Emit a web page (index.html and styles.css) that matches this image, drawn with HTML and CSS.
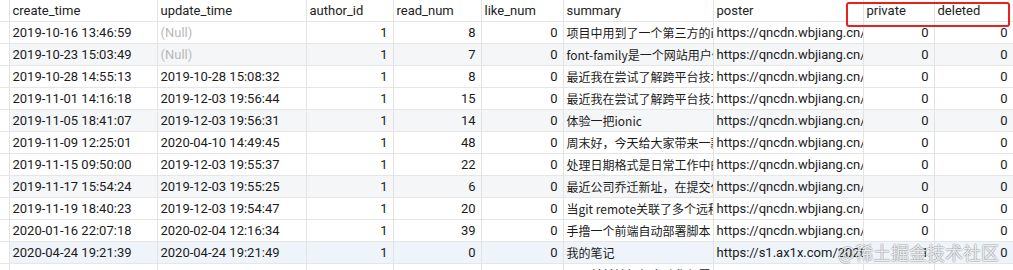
FILE: index.html
```html
<!DOCTYPE html>
<html lang="zh">
<head>
<meta charset="utf-8">
<link rel="stylesheet" href="styles.css">
</head>
<body>
<div class="grid-wrap">
<table class="grid">
<colgroup>
<col class="c-ind"><col class="c-create"><col class="c-update"><col class="c-author"><col class="c-read"><col class="c-like"><col class="c-summary"><col class="c-poster"><col class="c-private"><col class="c-deleted">
</colgroup>
<thead>
<tr><th></th><th>create_time</th><th>update_time</th><th>author_id</th><th>read_num</th><th>like_num</th><th>summary</th><th>poster</th><th>private</th><th>deleted</th></tr>
</thead>
<tbody>
<tr><td></td><td>2019-10-16 13:46:59</td><td class="null">(Null)</td><td class="num">1</td><td class="num">8</td><td class="num">0</td><td class="sum">项目中用到了一个第三方的ionic</td><td>https://qncdn.wbjiang.cn/a</td><td class="num">0</td><td class="num">0</td></tr>
<tr class="alt"><td></td><td>2019-10-23 15:03:49</td><td class="null">(Null)</td><td class="num">1</td><td class="num">7</td><td class="num">0</td><td class="sum">font-family是一个网站用户体验</td><td>https://qncdn.wbjiang.cn/a</td><td class="num">0</td><td class="num">0</td></tr>
<tr><td></td><td>2019-10-28 14:55:13</td><td>2019-10-28 15:08:32</td><td class="num">1</td><td class="num">8</td><td class="num">0</td><td class="sum">最近我在尝试了解跨平台技术</td><td>https://qncdn.wbjiang.cn/a</td><td class="num">0</td><td class="num">0</td></tr>
<tr><td></td><td>2019-11-01 14:16:18</td><td>2019-12-03 19:56:44</td><td class="num">1</td><td class="num">15</td><td class="num">0</td><td class="sum">最近我在尝试了解跨平台技术</td><td>https://qncdn.wbjiang.cn/a</td><td class="num">0</td><td class="num">0</td></tr>
<tr class="alt"><td></td><td>2019-11-05 18:41:07</td><td>2019-12-03 19:56:31</td><td class="num">1</td><td class="num">14</td><td class="num">0</td><td class="sum">体验一把ionic</td><td>https://qncdn.wbjiang.cn/a</td><td class="num">0</td><td class="num">0</td></tr>
<tr><td></td><td>2019-11-09 12:25:01</td><td>2020-04-10 14:49:45</td><td class="num">1</td><td class="num">48</td><td class="num">0</td><td class="sum">周末好，今天给大家带来一款</td><td>https://qncdn.wbjiang.cn/a</td><td class="num">0</td><td class="num">0</td></tr>
<tr><td></td><td>2019-11-15 09:50:00</td><td>2019-12-03 19:55:37</td><td class="num">1</td><td class="num">22</td><td class="num">0</td><td class="sum">处理日期格式是日常工作中的</td><td>https://qncdn.wbjiang.cn/a</td><td class="num">0</td><td class="num">0</td></tr>
<tr class="alt"><td></td><td>2019-11-17 15:54:24</td><td>2019-12-03 19:55:25</td><td class="num">1</td><td class="num">6</td><td class="num">0</td><td class="sum">最近公司乔迁新址，在提交代码</td><td>https://qncdn.wbjiang.cn/a</td><td class="num">0</td><td class="num">0</td></tr>
<tr><td></td><td>2019-11-19 18:40:23</td><td>2019-12-03 19:54:47</td><td class="num">1</td><td class="num">20</td><td class="num">0</td><td class="sum">当git remote关联了多个远程</td><td>https://qncdn.wbjiang.cn/a</td><td class="num">0</td><td class="num">0</td></tr>
<tr><td></td><td>2020-01-16 22:07:18</td><td>2020-02-04 12:16:34</td><td class="num">1</td><td class="num">39</td><td class="num">0</td><td class="sum">手撸一个前端自动部署脚本</td><td>https://qncdn.wbjiang.cn/</td><td class="num">0</td><td class="num">0</td></tr>
<tr class="alt sel"><td></td><td>2020-04-24 19:21:39</td><td>2020-04-24 19:21:49</td><td class="num">1</td><td class="num">0</td><td class="num">0</td><td class="sum">我的笔记</td><td>https://s1.ax1x.com/2020/04</td><td class="num">1</td><td class="num">0</td></tr>
<tr><td></td><td></td><td></td><td class="num"></td><td class="num"></td><td class="num"></td><td class="sum">用以前前端如何自动化部署</td><td></td><td class="num"></td><td class="num"></td></tr>
</tbody>
</table>
<div class="mark-box"></div>
<div class="watermark">@稀土掘金技术社区</div>
</div>
</body>
</html>
```

FILE: styles.css
```css
html, body {
  margin: 0;
  padding: 0;
  background: #ffffff;
}
body {
  width: 1013px;
  height: 270px;
  overflow: hidden;
  font-family: Roboto, "Noto Sans CJK SC", sans-serif;
  font-size: 13px;
  color: #1b1b1b;
}
.grid-wrap {
  position: relative;
  width: 1013px;
  height: 270px;
  overflow: hidden;
}
.grid {
  table-layout: fixed;
  border-collapse: collapse;
  width: 1013px;
}
.c-ind { width: 9px; }
.c-create { width: 148px; }
.c-update { width: 149px; }
.c-author { width: 87px; }
.c-read { width: 88px; }
.c-like { width: 82px; }
.c-summary { width: 150px; }
.c-poster { width: 150px; }
.c-private { width: 71px; }
.c-deleted { width: 79px; }

.grid th, .grid td {
  height: 21px;
  padding: 0 4px 0 3px;
  border-right: 1px solid #e3e3e3;
  border-bottom: 1px solid #e6e6e6;
  white-space: nowrap;
  overflow: hidden;
  text-overflow: clip;
  text-align: left;
  font-weight: normal;
  line-height: 21px;
}
.grid th {
  background: #ffffff;
  color: #222222;
}
.grid th:first-child, .grid td:first-child {
  padding: 0;
  background: #ffffff;
}
.grid td.num {
  text-align: right;
  padding-right: 5px;
}
.grid td.null {
  color: #b9b9b9;
}
.grid td.sum {
  font-family: "Noto Sans CJK SC", sans-serif;
  font-size: 12px;
  padding-left: 3px;
}
.grid tr.alt td {
  background: #f5f6f8;
}
.grid tr.sel td {
  background: #eff4fa;
}
.grid tr.alt td:first-child {
  background: #ffffff;
}
.mark-box {
  position: absolute;
  left: 846px;
  top: 2px;
  width: 160px;
  height: 21px;
  border: 2px solid #e8211d;
  border-radius: 3px;
}
.watermark {
  position: absolute;
  left: 838px;
  top: 239px;
  font-family: "Noto Sans CJK SC", sans-serif;
  font-size: 18px;
  line-height: 26px;
  color: rgba(255, 255, 255, 0.8);
  text-shadow: 1px 0 0 rgba(0, 0, 0, 0.18), -1px 0 0 rgba(0, 0, 0, 0.18), 0 1px 0 rgba(0, 0, 0, 0.18), 0 -1px 0 rgba(0, 0, 0, 0.18);
}
```
